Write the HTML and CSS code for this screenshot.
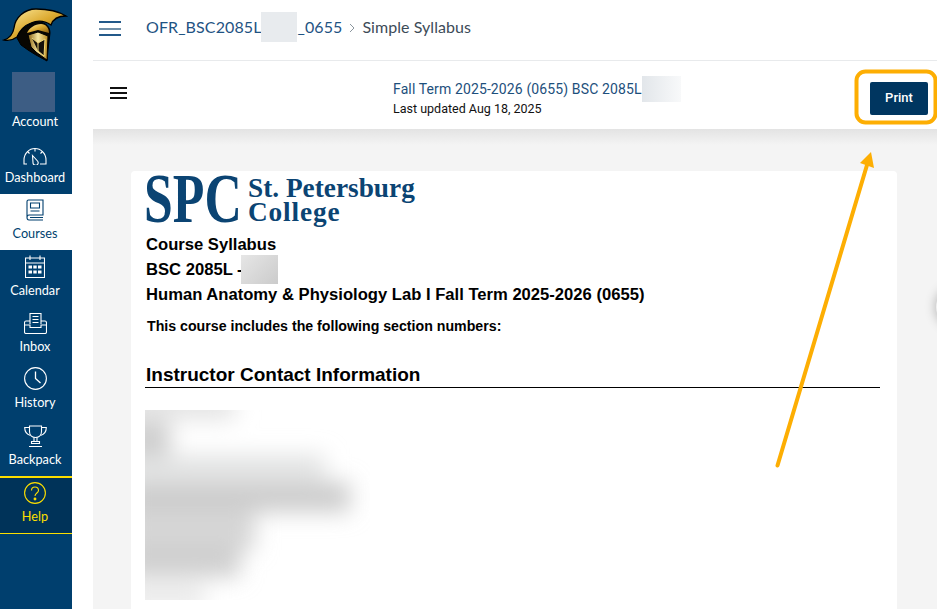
FILE: index.html
```html
<!DOCTYPE html>
<html lang="en">
<head>
<meta charset="utf-8">
<title>Simple Syllabus</title>
<link rel="stylesheet" href="styles.css">
</head>
<body>
<div class="app">
  <nav class="side">
    <div class="logo">
      <svg width="72" height="66" viewBox="0 0 72 66">
        <defs>
          <linearGradient id="gold" x1="0" y1="0" x2="1" y2="1"><stop offset="0" stop-color="#fff0a8"/><stop offset=".5" stop-color="#dcaa30"/><stop offset="1" stop-color="#8a5d10"/></linearGradient>
          <linearGradient id="gold2" x1="0" y1="0" x2="1" y2="0"><stop offset="0" stop-color="#8a6414"/><stop offset=".5" stop-color="#f6e6a0"/><stop offset="1" stop-color="#b98a20"/></linearGradient>
        </defs>
        <path d="M4 40C10 38 13 34 14 28C15 18 24 9 36 9C47 9 58 11 66 16C58 16 53 19 51 25C45 21 38 20 31 23C23 26 19 32 17 37C13 40 8 41 4 40Z" fill="url(#gold)" stroke="#000" stroke-width="1.300"/>
        <path d="M17 38C20 29 29 23 38 22C46 22 50 27 50 33L48 50L47 61L36 55L28 50L21 45Z" fill="#080602" stroke="#000"/>
        <path d="M27 33C29 28 35 24 41 24C46 24 49 28 49 33L38 30Z" fill="url(#gold)"/>
        <path d="M28 35L38 32L48 36L47 60L36 52L31 47Z" fill="url(#gold2)" stroke="#000"/>
        <path d="M32 38L38 43L38 51M38 43L45 39L44 56L38 51" fill="#15100a" stroke="#f2d878"/>
      </svg>
    </div>
    <a class="item account"><span class="avatar"></span><span class="lbl">Account</span></a>
    <a class="item">
      <svg class="ic dash" viewBox="0 0 24 18" fill="none" stroke="currentColor"><path d="M4 17H1V13C1 6.500 6 1.500 12 1.500S23 6.500 23 13V17H17"/><path d="M12 1.500V4.500M4.500 4.500L6.500 6.500M19.500 4.500L17.500 6.500"/><path d="M9.500 8.500L14.500 14A2.600 2.600 0 1 1 10 15.500Z"/></svg>
      <span class="lbl">Dashboard</span></a>
    <a class="item active">
      <svg class="ic course" viewBox="0 0 18 22" fill="none" stroke="currentColor"><path d="M1 18.500V2.500Q1 1 2.500 1H17V16H3Q1 16 1 18.500T3 21H17M4 18.500H17"/><path d="M4.500 4H13.500V9H4.500ZM4.500 12H13.500"/></svg>
      <span class="lbl">Courses</span></a>
    <a class="item">
      <svg class="ic cal" viewBox="0 0 20 23" fill="none" stroke="currentColor"><path d="M.5 3H19.500V22.500H.5ZM.5 8H19.500M5 .5V5M15 .5V5"/><path fill="currentColor" stroke="none" d="M3.500 10.500H7V13.500H3.500ZM8.300 10.500H11.700V13.500H8.300ZM13 10.500H16.500V13.500H13ZM3.500 15.500H7V18.500H3.500ZM8.300 15.500H11.700V18.500H8.300ZM13 15.500H16.500V18.500H13Z"/></svg>
      <span class="lbl">Calendar</span></a>
    <a class="item">
      <svg class="ic inbox" viewBox="0 0 23 21" fill="none" stroke="currentColor"><path d="M6 11V.5H17V11M8.500 3.500H14.500M8.500 6.500H14.500M8.500 9.500H14.500"/><path d="M6 8H2Q.5 8 .5 10V19Q.5 20.500 2 20.500H21Q22.500 20.500 22.500 19V10Q22.500 8 21 8H17M.5 12H6V14.500H17V12H22.500"/></svg>
      <span class="lbl">Inbox</span></a>
    <a class="item">
      <svg class="ic round" viewBox="0 0 23 23" fill="none" stroke="currentColor"><circle cx="11.500" cy="11.500" r="10.900"/><path d="M11.500 4.500V11.500L16.500 16" stroke-width="1.300"/></svg>
      <span class="lbl">History</span></a>
    <a class="item">
      <svg class="ic cup" viewBox="0 0 23 22" fill="none" stroke="currentColor"><path d="M5.500 1H17.500V6.500C17.500 10.500 14.500 12.500 11.500 12.500S5.500 10.500 5.500 6.500Z"/><path d="M5.500 2.500H.7C.7 7 3 9.500 6.500 10.500M17.500 2.500H22.300C22.300 7 20 9.500 16.500 10.500"/><path d="M10 12.500V16.500H13V12.500M7.500 16.500H15.500V18.500H7.500ZM5 21.500H18"/></svg>
      <span class="lbl">Backpack</span></a>
    <a class="item help">
      <svg class="ic round2" viewBox="0 0 22 22" fill="none" stroke="currentColor"><circle cx="11" cy="11" r="10.400"/><path d="M7.500 8.500C7.500 6.500 9 5 11 5S14.500 6.500 14.500 8.500C14.500 11 11 11 11 14"/><circle cx="11" cy="17" r=".9" fill="currentColor"/></svg>
      <span class="lbl">Help</span></a>
  </nav>

  <main class="main">
    <header class="crumbs">
      <span class="burger"><i></i><i></i><i></i></span>
      <span class="crumb-link">OFR_BSC2085L<span class="mask1"></span>_0655</span>
      <svg class="chev" width="6" height="10" viewBox="0 0 6 10" fill="none" stroke="#8b969e" stroke-width="1"><path d="M1 1L5 5L1 9"/></svg>
      <span class="crumb-cur">Simple Syllabus</span>
    </header>
    <section class="subbar">
      <span class="menu"><i></i><i></i><i></i></span>
      <div class="title">
        <div class="t1">Fall Term 2025-2026 (0655) BSC 2085L<span class="mask2"></span></div>
        <div class="t2">Last updated Aug 18, 2025</div>
      </div>
      <button class="print">Print</button>
    </section>
    <section class="canvas">
      <article class="card">
        <div class="spc">
          <span class="spc-big">SPC</span>
          <span class="spc-name"><span class="st">St. Petersburg</span><span class="col">College</span></span>
        </div>
        <h1>Course Syllabus</h1>
        <h1>BSC 2085L -<span class="mask3"></span></h1>
        <h1>Human Anatomy &amp; Physiology Lab I Fall Term 2025-2026 (0655)</h1>
        <p class="incl">This course includes the following section numbers:</p>
        <h2>Instructor Contact Information</h2>
        <div class="blur">
          <svg width="225" height="190" viewBox="0 0 225 190">
            <defs><filter id="bl" x="-30%" y="-30%" width="160%" height="160%"><feGaussianBlur stdDeviation="11"/></filter></defs>
            <rect width="225" height="190" fill="#fff"/>
            <g filter="url(#bl)">
              <rect x="-20" y="-20" width="110" height="30" fill="#e4e4e4"/>
              <rect x="-20" y="12" width="45" height="35" fill="#cdcdcd"/>
              <rect x="-20" y="45" width="200" height="25" fill="#e2e3e3"/>
              <rect x="-20" y="72" width="225" height="30" fill="#cccccc"/>
              <rect x="-20" y="100" width="130" height="40" fill="#d6d6d6"/>
              <rect x="-20" y="135" width="115" height="32" fill="#cfcfcf"/>
              <rect x="-20" y="172" width="80" height="30" fill="#ececec"/>
            </g>
          </svg>
        </div>
      </article>
      <span class="edge"></span>
    </section>
  </main>
</div>
<svg class="overlay" width="937" height="609" viewBox="0 0 937 609" fill="none">
  <rect x="856.500" y="71.500" width="79" height="51" rx="9" stroke="#fdae03" stroke-width="4"/>
  <path d="M777.500 465.500L867 165" stroke="#fdae03" stroke-width="4" stroke-linecap="round"/>
  <path d="M871 152L874 168L860 163Z" fill="#fdae03"/>
</svg>
</body>
</html>
```
FILE: styles.css
```css
* { box-sizing: border-box; }
html, body { margin: 0; height: 100%; overflow: hidden; background: #fff; }
.app { display: flex; height: 609px; position: relative; }

.side { width: 72px; flex: none; background: #003f6e; display: flex; flex-direction: column; font-family: Lato, sans-serif; }
.logo { height: 65.5px; flex: none; }
.logo svg { display: block; }
.item { height: 56.4px; flex: none; display: flex; flex-direction: column; align-items: center; justify-content: flex-end; padding: 0 2px 9px 0; gap: 4px; color: #fff; font-size: 12.7px; line-height: 16px; }
.lbl { display: block; white-space: nowrap; }
.ic { display: block; stroke-width: 1.1px; }
.dash { width: 24px; height: 18px; }
.course { width: 18px; height: 22px; }
.cal { width: 20px; height: 23px; }
.inbox { width: 23px; height: 21px; }
.round { width: 23px; height: 23px; }
.cup { width: 23px; height: 22px; }
.round2 { width: 22px; height: 22px; }
.account { height: 72px; padding-bottom: 9px; gap: 1px; }
.avatar { width: 43px; height: 40px; background: #3d5d84; margin-right: 3px; }
.active { background: #fff; color: #003f6e; }
.help { height: 58px; color: #fcdf00; background: #003359; border-top: 2px solid #fcdf00; border-bottom: 1px solid #fcdf00; padding-bottom: 9px; }

.main { flex: 1; min-width: 0; display: flex; flex-direction: column; padding-left: 21px; }
.crumbs { height: 61px; flex: none; display: flex; align-items: center; border-bottom: 1px solid #e8eaec; padding: 0 0 6px 6px; font: 16px/20px Lato, sans-serif; }
.burger { display: flex; flex-direction: column; justify-content: space-between; width: 22px; height: 15px; margin-right: 25px; margin-top: 3px; }
.burger i { display: block; height: 2px; background: #23598a; }
.burger i:nth-child(2) { background: #6f8fa8; }
.crumb-link { color: #1f5383; display: inline-flex; align-items: center; letter-spacing: .1px; }
.mask1 { display: inline-block; width: 36px; height: 30px; background: #e8ebee; }
.chev { margin: 2px 7px 0 7px; }
.crumb-cur { color: #3c4b58; letter-spacing: .05px; }

.subbar { height: 68px; flex: none; display: flex; align-items: center; background: #fff; font-family: Roboto, sans-serif; }
.menu { display: flex; flex-direction: column; justify-content: space-between; width: 17px; height: 12px; margin: -5px 0 0 17px; }
.menu i { display: block; height: 2px; background: #111; }
.title { margin: 7px 0 0 266px; width: 477px; }
.t1 { color: #1d4f7c; font-size: 14px; letter-spacing: .12px; line-height: 20px; display: flex; align-items: center; height: 20px; }
.mask2 { display: inline-block; width: 39px; height: 26px; background: linear-gradient(90deg, #e2e6ea, #f8f9fa); }
.t2 { color: #111; font-size: 12.5px; line-height: 20px; }
.print { width: 58px; height: 33px; border: 0; border-radius: 2px; background: #003660; color: #fff; font: 500 13px Roboto, sans-serif; padding: 0 0 2px; margin-top: 6px; }

.canvas { flex: 1; background: linear-gradient(#e3e3e3, #f4f4f4 16px); padding: 42px 40px 0 38px; position: relative; overflow: hidden; font-family: "Liberation Sans", Arial, sans-serif; color: #000; }
.card { background: #fff; border-radius: 4px; height: 460px; padding: 4px 17px 0 14px; }
.spc { display: flex; align-items: flex-start; height: 57px; font-family: "Liberation Serif", serif; font-weight: 700; color: #0b4473; }
.spc-big { display: block; flex: none; width: 132px; font-size: 69px; line-height: 48px; transform: scaleX(.75); transform-origin: left; margin: 0 -29px 0 -1px; white-space: nowrap; }
.spc-name { display: flex; flex-direction: column; align-items: flex-start; font-size: 27.3px; line-height: 24px; white-space: nowrap; margin: 1px 0 0 1px; }
.col { letter-spacing: .85px; }
h1 { margin: 0 0 0 1px; font-size: 16.63px; line-height: 25px; font-weight: 700; display: flex; align-items: center; height: 25px; white-space: nowrap; }
.mask3 { display: inline-block; width: 37px; height: 29px; background: linear-gradient(135deg, #e6e6e6, #cbcbcb); margin-left: -2px; }
.incl { margin: 9px 0 0 2px; font-size: 14.18px; line-height: 20px; font-weight: 700; }
h2 { margin: 26px 0 0; font-size: 19px; line-height: 25px; font-weight: 700; border-bottom: 1px solid #000; padding: 0 0 0 1px; }
.blur { margin-top: 22px; height: 190px; overflow: hidden; }
.blur svg { display: block; }
.edge { position: absolute; left: 843px; top: 158px; width: 40px; height: 40px; border-radius: 50%; background: #f0f0f0; box-shadow: 0 0 12px rgba(0,0,0,.3); }

.overlay { position: absolute; left: 0; top: 0; z-index: 2; pointer-events: none; }
```
